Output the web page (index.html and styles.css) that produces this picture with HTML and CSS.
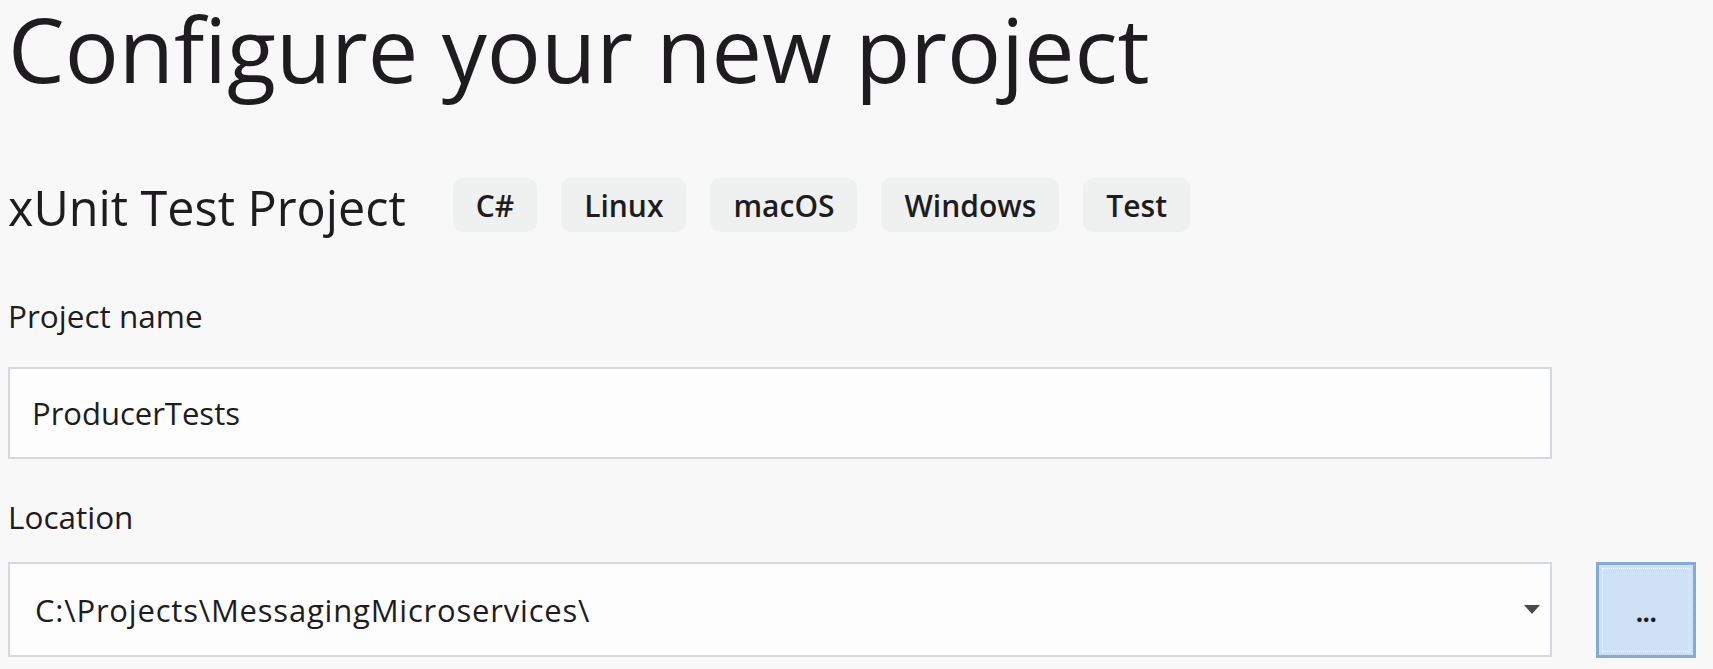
FILE: index.html
```html
<!DOCTYPE html>
<html lang="en">
<head>
<meta charset="utf-8">
<title>Configure your new project</title>
<link rel="stylesheet" href="styles.css">
</head>
<body>
<main class="page">
  <h1 class="title">Configure your new project</h1>
  <div class="template-row">
    <h2 class="template-name">xUnit Test Project</h2>
    <ul class="tags">
      <li class="tag">C#</li>
      <li class="tag">Linux</li>
      <li class="tag">macOS</li>
      <li class="tag">Windows</li>
      <li class="tag">Test</li>
    </ul>
  </div>
  <label class="field-label">Project name</label>
  <div class="text-input">ProducerTests</div>
  <label class="field-label location-label">Location</label>
  <div class="location-row">
    <div class="text-input combo">
      <span class="combo-value">C:\Projects\MessagingMicroservices\</span>
      <svg class="caret" width="16" height="9" viewBox="0 0 16 9"><path d="M0 0 H16 L8 9 Z" fill="#4a4a4a"/></svg>
    </div>
    <button class="browse"><span class="browse-inner">...</span></button>
  </div>
</main>
</body>
</html>
```
FILE: styles.css
```css
html, body {
  margin: 0;
  padding: 0;
  background: #f8f8f8;
  height: 100%;
  overflow: hidden;
}

.page {
  padding-left: 8px;
  font-family: "Open Sans", "Noto Sans", sans-serif;
  color: #1e1c1f;
}

.title {
  margin: -10px 0 0 0;
  font-size: 90px;
  font-weight: 400;
  line-height: 116px;
  white-space: nowrap;
}

.template-row {
  display: flex;
  align-items: flex-start;
  margin-top: 72px;
  height: 54px;
}

.template-name {
  margin: 0 47px 0 0;
  padding-top: 2px;
  font-size: 48.5px;
  font-weight: 400;
  line-height: 54px;
  white-space: nowrap;
}

.tags {
  display: flex;
  gap: 24px;
  list-style: none;
  margin: 0;
  padding: 0;
}

.tag {
  height: 54px;
  line-height: 56px;
  padding: 0 23px;
  background: #eff0f0;
  border-radius: 10px;
  font-size: 30px;
  font-weight: 600;
  white-space: nowrap;
}

.field-label {
  display: block;
  margin-top: 64px;
  font-size: 31.5px;
  line-height: 40px;
}

.location-label {
  margin-top: 38px;
}

.text-input {
  box-sizing: border-box;
  width: 1544px;
  height: 92px;
  margin-top: 31px;
  padding-left: 22px;
  border: 2px solid #d5d9de;
  background: #fdfdfd;
  font-size: 31px;
  line-height: 88px;
  white-space: nowrap;
}

.location-row {
  display: flex;
  align-items: flex-start;
  gap: 44px;
  margin-top: 25px;
}

.combo {
  display: flex;
  align-items: center;
  justify-content: space-between;
  height: 95px;
  margin-top: 0;
  padding-right: 10px;
  line-height: normal;
  flex: none;
}

.combo-value {
  padding-left: 3px;
  letter-spacing: 0.8px;
}

.caret {
  display: block;
}

.browse {
  box-sizing: border-box;
  width: 100px;
  height: 96px;
  padding: 3px;
  border: 3px solid #86aad2;
  background: #cde0f4;
  font-family: "Open Sans", sans-serif;
  color: #1e1c1f;
  flex: none;
}

.browse-inner {
  display: flex;
  align-items: center;
  justify-content: center;
  box-sizing: border-box;
  height: 100%;
  padding-top: 4px;
  border: 1px dotted #f4f8fc;
  font-size: 26px;
  font-weight: 700;
  letter-spacing: -0.5px;
}
```
